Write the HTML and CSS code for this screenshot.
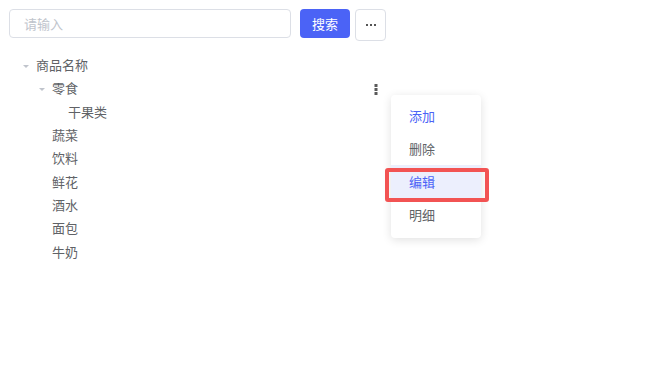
FILE: index.html
```html
<!DOCTYPE html>
<html lang="zh-CN">

<head>
    <meta charset="UTF-8">
    <meta name="viewport" content="width=device-width, initial-scale=1.0">
    <title>商品分类</title>
    <link rel="stylesheet" href="styles.css">
</head>

<body>
    <div class="toolbar">
        <input class="search-input" type="text" placeholder="请输入">
        <button class="button primary">搜索</button>
        <button class="button more">
            <svg width="10" height="2" viewBox="0 0 10 2"><rect x="0" y="0" width="2" height="2" fill="#555"/><rect x="4" y="0" width="2" height="2" fill="#555"/><rect x="8" y="0" width="2" height="2" fill="#555"/></svg>
        </button>
    </div>

    <!-- Category tree -->
    <div class="tree">
        <div class="tree-row">
            <span class="caret"></span>
            <span class="label">商品名称</span>
        </div>
        <div class="tree-row lv1">
            <span class="caret"></span>
            <span class="label">零食</span>
            <span class="kebab">
                <svg width="4" height="11" viewBox="0 0 4 11"><rect x="0.5" y="0" width="3" height="3" fill="#5a5a5a"/><rect x="0.5" y="4" width="3" height="3" fill="#5a5a5a"/><rect x="0.5" y="8" width="3" height="3" fill="#5a5a5a"/></svg>
                <div class="menu">
                    <div class="menu-item active">添加</div>
                    <div class="menu-item">删除</div>
                    <div class="menu-item hover">编辑</div>
                    <div class="menu-item">明细</div>
                    <div class="mark"></div>
                </div>
            </span>
        </div>
        <div class="tree-row lv2">
            <span class="caret empty"></span>
            <span class="label">干果类</span>
        </div>
        <div class="tree-row lv1">
            <span class="caret empty"></span>
            <span class="label">蔬菜</span>
        </div>
        <div class="tree-row lv1">
            <span class="caret empty"></span>
            <span class="label">饮料</span>
        </div>
        <div class="tree-row lv1">
            <span class="caret empty"></span>
            <span class="label">鲜花</span>
        </div>
        <div class="tree-row lv1">
            <span class="caret empty"></span>
            <span class="label">酒水</span>
        </div>
        <div class="tree-row lv1">
            <span class="caret empty"></span>
            <span class="label">面包</span>
        </div>
        <div class="tree-row lv1">
            <span class="caret empty"></span>
            <span class="label">牛奶</span>
        </div>
    </div>
</body>

</html>
```

FILE: styles.css
```css
body {
    margin: 0;
    padding: 9px;
    background-color: #ffffff;
    font-family: "Noto Sans CJK SC", "Noto Sans", sans-serif;
    font-size: 13px;
    color: #606266;
}

.toolbar {
    display: flex;
    align-items: flex-start;
}

.search-input {
    box-sizing: border-box;
    width: 282px;
    height: 29px;
    padding: 0 14px;
    border: 1px solid #dcdfe6;
    border-radius: 4px;
    font-family: inherit;
    font-size: 13px;
    color: #606266;
    outline: none;
}

.search-input::placeholder {
    color: #c0c4cc;
}

.button {
    box-sizing: border-box;
    display: flex;
    justify-content: center;
    align-items: center;
    padding: 0;
    border-radius: 4px;
    font-family: inherit;
    font-size: 13px;
    cursor: pointer;
}

.button.primary {
    width: 50px;
    height: 29px;
    margin-left: 9px;
    border: none;
    background-color: #4b63f6;
    color: #ffffff;
}

.button.more {
    width: 31px;
    height: 32px;
    margin-left: 5px;
    border: 1px solid #dcdfe6;
    background-color: #ffffff;
}

.tree {
    width: 377px;
    margin-top: 12px;
}

.tree-row {
    display: flex;
    align-items: center;
    height: 23.33px;
    padding-left: 14px;
    padding-right: 8px;
}

.tree-row.lv1 {
    padding-left: 30px;
}

.tree-row.lv2 {
    padding-left: 46px;
}

.caret {
    width: 0;
    height: 0;
    margin-right: 7px;
    border-left: 3px solid transparent;
    border-right: 3px solid transparent;
    border-top: 3.5px solid #c0c4cc;
    transform: translateY(2px);
}

.caret.empty {
    border-top-color: transparent;
}

.label {
    line-height: 1;
}

.kebab {
    position: relative;
    display: flex;
    margin-left: auto;
    transform: translateY(2px);
}

.menu {
    position: absolute;
    left: 17px;
    top: 11px;
    width: 90px;
    padding: 4px 0 7px;
    background: #ffffff;
    border-radius: 4px;
    box-shadow: 0px 2px 10px rgba(0, 0, 0, 0.12);
    z-index: 2;
}

.menu-item {
    height: 33px;
    line-height: 33px;
    padding-left: 18px;
    color: #606266;
}

.menu-item.active {
    color: #4b63f6;
}

.menu-item.hover {
    background-color: #eceffd;
    color: #4b63f6;
}

/* annotation box round the hovered item */
.mark {
    position: absolute;
    left: -6px;
    top: 73px;
    width: 104px;
    height: 34px;
    box-sizing: border-box;
    border: 4px solid #f25353;
    border-radius: 3px;
}
```
